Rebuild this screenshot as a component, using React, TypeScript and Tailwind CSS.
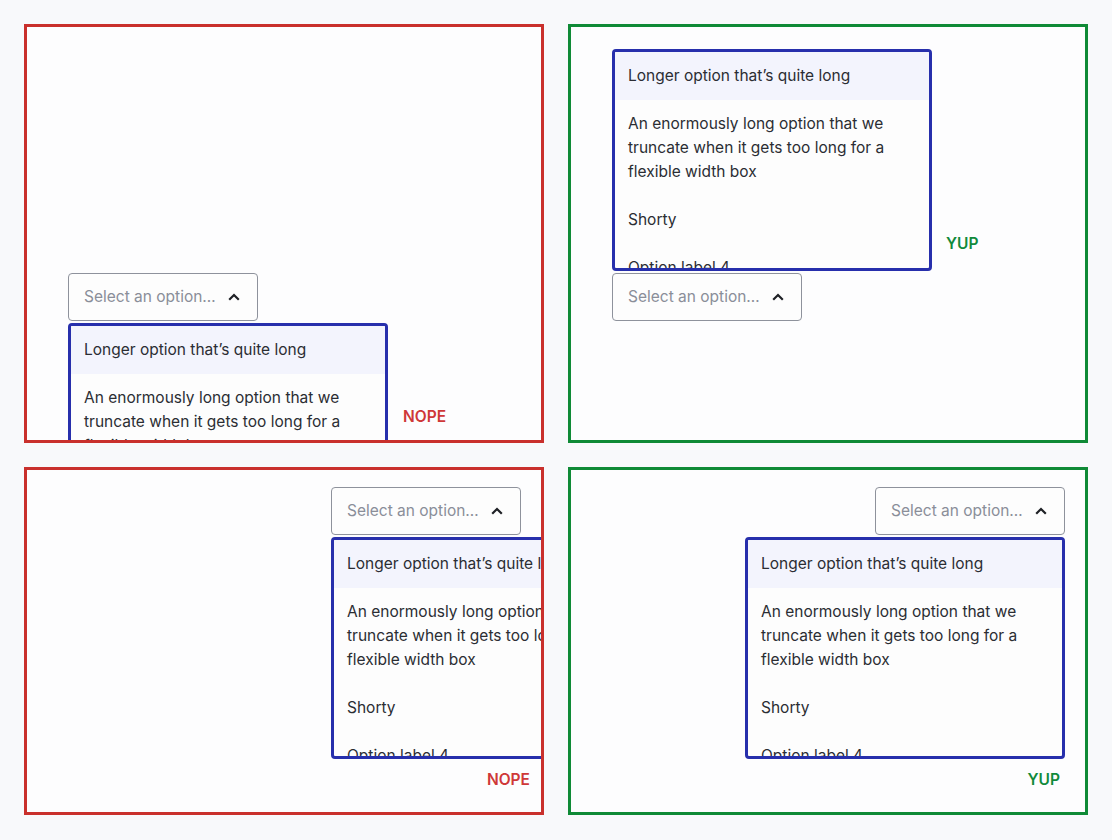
import React from 'react';

const options = [
  'Longer option that’s quite long',
  'An enormously long option that we truncate when it gets too long for a flexible width box',
  'Shorty',
  'Option label 4',
  'Option label 5',
];

function Chevron() {
  return (
    <svg width="12" height="8" viewBox="0 0 12 8" fill="none" className="shrink-0">
      <path d="M1.2 6.8 6 2l4.8 4.8" stroke="#1f2126" strokeWidth="2.2" strokeLinejoin="miter" />
    </svg>
  );
}

function Trigger() {
  return (
    <button className="flex h-12 w-[190px] items-center justify-between rounded border border-[#8e929c] bg-[#fdfdfd] pl-[15px] pr-[17px]">
      <span className="text-[15.5px] text-[#8a8e99]">Select an option…</span>
      <Chevron />
    </button>
  );
}

function Listbox({ className }: { className: string }) {
  return (
    <ul className={`absolute z-10 h-[222px] w-[320px] overflow-hidden rounded border-[3px] border-[#272fac] bg-[#fdfdfd] ${className}`}>
      {options.map((label, i) => (
        <li
          key={label}
          className={`px-[13px] py-3 text-[15.5px] leading-6 text-[#2b2d33] ${i === 0 ? 'bg-[#f3f4fd]' : ''}`}
        >
          {label}
        </li>
      ))}
    </ul>
  );
}

export default function App() {
  return (
    <div
      className="min-h-[840px] bg-[#f8f9fb] p-6"
      style={{ fontFamily: 'Inter, "Noto Sans", sans-serif' }}
    >
      <div className="grid grid-cols-[520px_520px] grid-rows-[419px_348px] gap-6">
        {/* flips down, runs out of the bottom */}
        <div className="relative overflow-hidden border-[3px] border-[#c9302c] bg-[#fdfdfe] pl-[41px] pt-[246px]">
          <div className="relative w-fit">
            <Trigger />
            <Listbox className="left-0 top-full mt-[2px]" />
          </div>
          <span className="absolute left-[376px] top-[380px] text-[15.5px] font-semibold leading-5 text-[#cf3838]">NOPE</span>
        </div>

        {/* flips up */}
        <div className="relative overflow-hidden border-[3px] border-[#0f8a36] bg-[#fdfdfe] pl-[41px] pt-[246px]">
          <div className="relative w-fit">
            <Trigger />
            <Listbox className="bottom-full left-0 mb-[2px]" />
          </div>
          <span className="absolute left-[375px] top-[207px] text-[15.5px] font-semibold leading-5 text-[#108a3b]">YUP</span>
        </div>

        {/* left aligned, runs out of the right side */}
        <div className="relative flex justify-end overflow-hidden border-[3px] border-[#c9302c] bg-[#fdfdfe] pr-5 pt-[17px]">
          <div className="relative h-fit w-fit">
            <Trigger />
            <Listbox className="left-0 top-full mt-[2px]" />
          </div>
          <span className="absolute right-[11px] top-[300px] text-[15.5px] font-semibold leading-5 text-[#cf3838]">NOPE</span>
        </div>

        {/* right aligned */}
        <div className="relative flex justify-end overflow-hidden border-[3px] border-[#0f8a36] bg-[#fdfdfe] pr-5 pt-[17px]">
          <div className="relative h-fit w-fit">
            <Trigger />
            <Listbox className="right-0 top-full mt-[2px]" />
          </div>
          <span className="absolute right-[25px] top-[300px] text-[15.5px] font-semibold leading-5 text-[#108a3b]">YUP</span>
        </div>
      </div>
    </div>
  );
}
